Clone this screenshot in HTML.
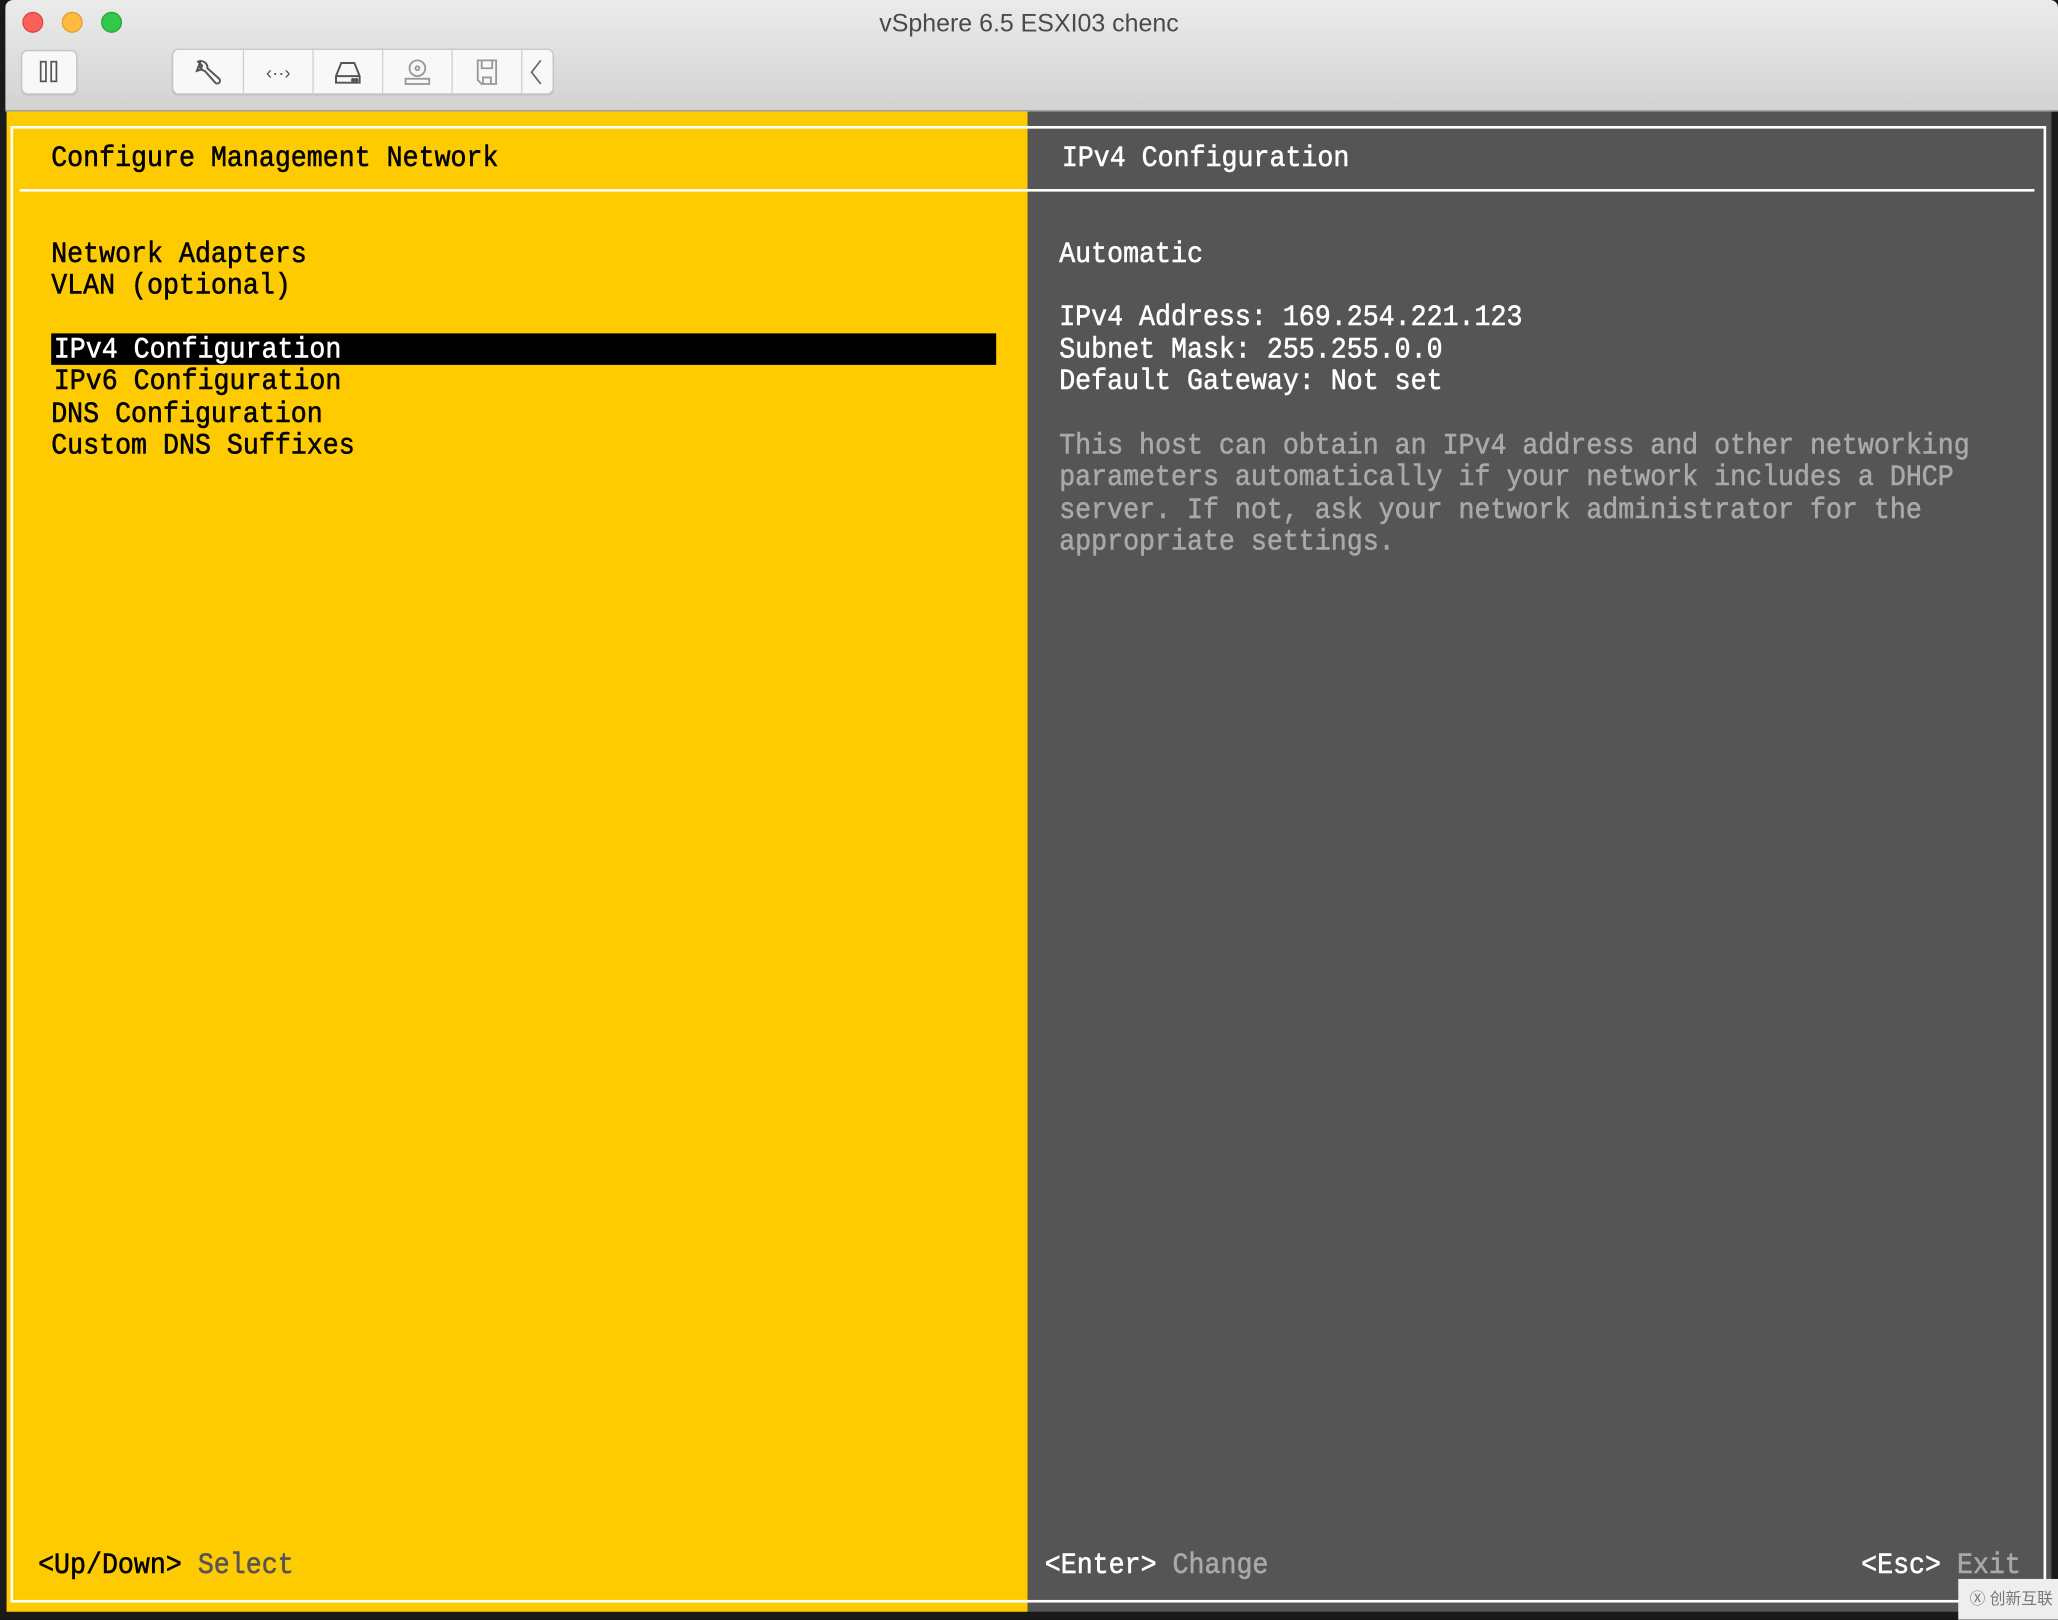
<!DOCTYPE html>
<html><head><meta charset="utf-8"><style>
html,body{margin:0;padding:0;background:#111;overflow:hidden;width:2058px;height:1620px}
#w{position:absolute;left:0;top:0;width:1568px;height:1234px;transform:scale(1.3125);transform-origin:0 0;background:#1a1a1a}
.chrome{position:absolute;left:4px;top:0;width:1564px;height:84px;background:linear-gradient(#ebebeb,#d3d3d3);border-radius:6px 6px 0 0;border-bottom:1px solid #b8b8b8}
.tl{position:absolute;top:9px;width:14px;height:14px;border-radius:50%}
.title{position:absolute;top:8px;left:0;width:1568px;text-align:center;font:19px "Liberation Sans",sans-serif;color:#4a4a4a}
.btn{position:absolute;background:#f8f8f8;border:1px solid #c4c4c4;border-radius:5px;box-shadow:0 1px 1px rgba(0,0,0,.08)}
.seg{position:absolute;top:0;height:33px;border-right:1px solid #d0d0d0;display:flex;align-items:center;justify-content:center}
.yel{position:absolute;left:5px;top:85px;width:778px;height:1143px;background:#fecb00}
.gry{position:absolute;left:783px;top:85px;width:780px;height:1143px;background:#555}
.bord{position:absolute;left:8px;top:96px;width:1547px;height:1121px;border:2px solid #fff;box-sizing:content-box}
.hl{position:absolute;left:15px;top:144px;width:1535px;height:2px;background:#fff}
.t{position:absolute;font:20.3px/24px "Liberation Mono",monospace;white-space:pre;transform:scaleY(1.12);transform-origin:0 50%;-webkit-text-stroke:.4px currentColor}
.k{color:#000}.w{color:#fff}.g{color:#a9a9a9}.d{color:#555}
</style></head><body><div id="w">
<div class="chrome">
<div class="tl" style="left:13px;background:#fc605b;border:1px solid #de4640"></div>
<div class="tl" style="left:43px;background:#fdbc40;border:1px solid #dea034"></div>
<div class="tl" style="left:73px;background:#34c84a;border:1px solid #27aa35"></div>
</div>
<div class="title">vSphere 6.5 ESXI03 chenc</div>
<div class="btn" style="left:16px;top:38px;width:41px;height:32px"><svg width="41" height="32"><rect x="14" y="8" width="4" height="15" fill="none" stroke="#555" stroke-width="1.3"/><rect x="22" y="8" width="4" height="15" fill="none" stroke="#555" stroke-width="1.3"/></svg></div>
<div class="btn" style="left:131px;top:37px;width:289px;height:33px">
<div class="seg" style="left:0;width:53px"><svg width="26" height="26" fill="none" stroke="#555" stroke-width="1.5"><path d="M7 4a5 5 0 0 0 3 8l8 9a2 2 0 0 0 3-3l-9-8a5 5 0 0 0-7-5l3 3-1 3-3 1z"/></svg></div>
<div class="seg" style="left:54px;width:52px;color:#555;font:14px 'Liberation Sans',sans-serif">‹··›</div>
<div class="seg" style="left:107px;width:52px"><svg width="26" height="26" fill="none" stroke="#555" stroke-width="1.5"><path d="M8 6h10l4 10v5H4v-5z M4 16h18"/><circle cx="17" cy="19" r=".8" fill="#555"/><circle cx="19.5" cy="19" r=".8" fill="#555"/></svg></div>
<div class="seg" style="left:160px;width:52px"><svg width="26" height="26" fill="none" stroke="#999" stroke-width="1.4"><circle cx="13" cy="10" r="6"/><circle cx="13" cy="10" r="1.5"/><rect x="4" y="18" width="18" height="4"/></svg></div>
<div class="seg" style="left:213px;width:52px"><svg width="26" height="26" fill="none" stroke="#999" stroke-width="1.4"><path d="M6 4h14v18H9l-3-3z M9 4v6h8V4 M10 22v-5h6v5"/></svg></div>
<div class="seg" style="left:266px;width:22px;border:none"><svg width="14" height="26" fill="none" stroke="#666" stroke-width="1.3"><path d="M10 4 3 13l7 9"/></svg></div>
</div>
<div class="yel"></div><div class="gry"></div>
<div class="bord"></div><div class="hl"></div>
<div style="position:absolute;left:39px;top:254px;width:720px;height:24px;background:#000"></div>
<div class="t k" style="left:39px;top:110px">Configure Management Network</div>
<div class="t k" style="left:39px;top:183px">Network Adapters</div>
<div class="t k" style="left:39px;top:207px">VLAN (optional)</div>
<div class="t w" style="left:41px;top:256px">IPv4 Configuration</div>
<div class="t k" style="left:41px;top:280px">IPv6 Configuration</div>
<div class="t k" style="left:39px;top:305px">DNS Configuration</div>
<div class="t k" style="left:39px;top:329px">Custom DNS Suffixes</div>
<div class="t w" style="left:809px;top:110px">IPv4 Configuration</div>
<div class="t w" style="left:807px;top:183px">Automatic</div>
<div class="t w" style="left:807px;top:231px">IPv4 Address: 169.254.221.123</div>
<div class="t w" style="left:807px;top:256px">Subnet Mask: 255.255.0.0</div>
<div class="t w" style="left:807px;top:280px">Default Gateway: Not set</div>
<div class="t g" style="left:807px;top:329px">This host can obtain an IPv4 address and other networking</div>
<div class="t g" style="left:807px;top:353px">parameters automatically if your network includes a DHCP</div>
<div class="t g" style="left:807px;top:378px">server. If not, ask your network administrator for the</div>
<div class="t g" style="left:807px;top:402px">appropriate settings.</div>
<div class="t" style="left:29px;top:1182px"><span class="k">&lt;Up/Down&gt;</span> <span class="d">Select</span></div>
<div class="t" style="left:796px;top:1182px"><span class="w">&lt;Enter&gt;</span> <span class="g">Change</span></div>
<div class="t" style="left:1418px;top:1182px"><span class="w">&lt;Esc&gt;</span> <span class="g">Exit</span></div>
<div style="position:absolute;left:1492px;top:1203px;width:76px;height:31px;background:#eee;font:12px 'Liberation Sans','Noto Sans CJK SC',sans-serif;color:#777;line-height:31px;text-align:right;padding-right:4px;box-sizing:border-box">Ⓧ 创新互联</div>
</div></body></html>
